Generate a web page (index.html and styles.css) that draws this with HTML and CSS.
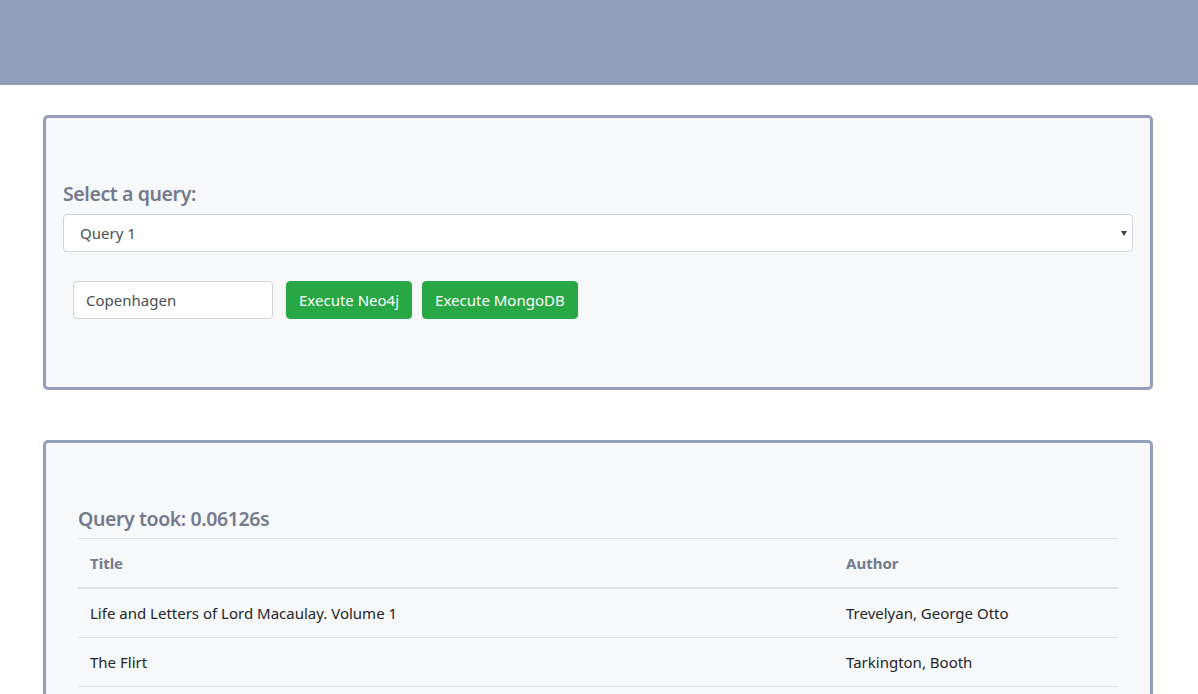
FILE: index.html
```html
<!DOCTYPE html>
<html lang="en">
<head>
<meta charset="utf-8">
<title>Query</title>
<link rel="stylesheet" href="styles.css">
</head>
<body>
<header class="topbar"></header>
<main class="container">
  <section class="card card-query">
    <label class="label" for="q">Select a query:</label>
    <div class="select-wrap">
      <select id="q" class="select"><option>Query 1</option></select>
    </div>
    <div class="controls">
      <input class="input" type="text" value="Copenhagen">
      <button class="btn btn-first">Execute Neo4j</button>
      <button class="btn">Execute MongoDB</button>
    </div>
  </section>
  <section class="card card-result">
    <h5 class="took">Query took: 0.06126s</h5>
    <table class="table">
      <thead>
        <tr><th class="col-title">Title</th><th>Author</th></tr>
      </thead>
      <tbody>
        <tr><td>Life and Letters of Lord Macaulay. Volume 1</td><td>Trevelyan, George Otto</td></tr>
        <tr><td>The Flirt</td><td>Tarkington, Booth</td></tr>
      </tbody>
    </table>
  </section>
</main>
</body>
</html>
```
FILE: styles.css
```css
* { box-sizing: border-box; }
html, body { margin: 0; padding: 0; background: #fff; }
body {
  font-family: "Noto Sans", "Open Sans", "Liberation Sans", sans-serif;
  font-size: 16px;
  line-height: 1.5;
  color: #212529;
}
.topbar {
  height: 85px;
  background: #919ebb;
}
.container {
  width: 1110px;
  margin: 30px 0 0 43px;
  display: flex;
  flex-direction: column;
  gap: 50px;
}
.card {
  border: 3px solid #939fbb;
  border-radius: 5px;
  background: #f7f8fa;
}
.card-query {
  padding: 64px 17px 68px 17px;
  height: 275px;
}
.label {
  display: block;
  font-size: 19.5px;
  font-weight: 600;
  line-height: 24px;
  color: #737b8f;
  margin-bottom: 8px;
  letter-spacing: -0.4px;
}
.select-wrap {
  position: relative;
}
.select-wrap::after {
  content: "";
  position: absolute;
  right: 6px;
  top: 17px;
  border-left: 3.5px solid transparent;
  border-right: 3.5px solid transparent;
  border-top: 5px solid #3d4148;
  pointer-events: none;
}
.select {
  display: block;
  width: 100%;
  height: 38px;
  appearance: none;
  -webkit-appearance: none;
  background: #fff;
  border: 1px solid #ced4da;
  border-radius: 4px;
  padding: 0 24px 0 16px;
  font: inherit;
  font-size: 15px;
  color: #495057;
}
.controls {
  display: flex;
  align-items: center;
  margin-top: 29px;
  padding-left: 10px;
}
.input {
  width: 200px;
  height: 38px;
  border: 1px solid #ced4da;
  border-radius: 4px;
  background: #fff;
  padding: 0 12px;
  font: inherit;
  font-size: 15px;
  color: #495057;
}
.btn {
  height: 38px;
  border: 1px solid #28a745;
  background: #28a745;
  color: #fff;
  border-radius: 4px;
  padding: 0 12px;
  font: inherit;
  font-size: 15px;
  margin-left: 10px;
}
.btn-first { margin-left: 13px; }
.card-result {
  padding: 64px 32px 40px 32px;
  min-height: 300px;
}
.took {
  margin: 0 0 7px 0;
  font-size: 19.5px;
  font-weight: 600;
  line-height: 24px;
  color: #737b8f;
  letter-spacing: -0.4px;
}
.table {
  width: 100%;
  border-collapse: collapse;
  font-size: 15px;
}
.table th, .table td {
  text-align: left;
  padding: 12px;
  line-height: 24px;
  border-top: 1px solid #dee2e6;
  vertical-align: top;
}
.table th {
  font-weight: 700;
  color: #737b8f;
  border-bottom: 2px solid #dee2e6;
}
.table td {
  color: #212529;
  border-bottom: 1px solid #dee2e6;
}
.col-title { width: 756px; }
```
